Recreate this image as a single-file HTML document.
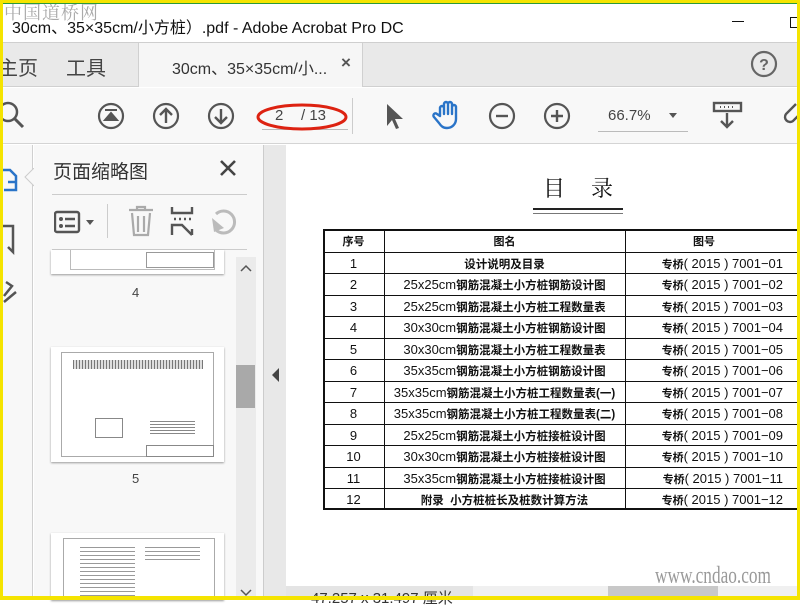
<!DOCTYPE html>
<html><head><meta charset="utf-8"><style>
*{margin:0;padding:0;box-sizing:border-box}
body{width:800px;height:600px;overflow:hidden;position:relative;background:#fff;font-family:"Liberation Sans","Noto Sans CJK SC",sans-serif;color:#333}
.a{position:absolute}
.row{position:absolute;left:323px;width:480px;height:22px;border-top:1px solid #111;font-size:13px;color:#111}
.row span{position:absolute;top:3px;white-space:nowrap}
.c1{left:0;width:61px;text-align:center}
.c2{left:61px;width:241px;text-align:center}
.c3{left:302px;width:158px;text-align:right}
.b{font-weight:bold;font-size:11.5px}
</style></head><body>
<div class="a" style="left:0;top:0;width:800px;height:43px;background:#fff;border-bottom:1px solid #cfcfcf"></div>
<div class="a" style="left:4px;top:-1px;font-family:'Liberation Serif','Noto Serif CJK SC',serif;font-size:18px;color:#aaa;letter-spacing:1px">中国道桥网</div>
<div class="a" style="left:12px;top:14px;font-size:16px;color:#111;white-space:nowrap">30cm、35×35cm/小方桩）.pdf - Adobe Acrobat Pro DC</div>
<div class="a" style="left:732px;top:21px;width:12px;height:1px;background:#111"></div>
<div class="a" style="left:790px;top:17px;width:8px;height:11px;border:1px solid #111"></div>
<div class="a" style="left:0;top:43px;width:800px;height:44px;background:#e9e9e9;border-bottom:1px solid #d0d0d0"></div>
<div class="a" style="left:-2px;top:52px;font-size:20px;color:#444">主页</div>
<div class="a" style="left:66px;top:52px;font-size:20px;color:#444">工具</div>
<div class="a" style="left:138px;top:43px;width:225px;height:44px;background:#f6f6f6;border-left:1px solid #d0d0d0;border-right:1px solid #d0d0d0"></div>
<div class="a" style="left:172px;top:55px;font-size:16px;color:#333;white-space:nowrap">30cm、35×35cm/小...</div>
<div class="a" style="left:341px;top:53px;font-size:17px;color:#555;font-weight:bold">×</div>
<svg class="a" style="left:750px;top:50px" width="28" height="28"><circle cx="14" cy="14" r="12" fill="none" stroke="#666" stroke-width="2.2"/><text x="14" y="20" text-anchor="middle" font-family="Liberation Sans" font-weight="bold" font-size="16" fill="#666">?</text></svg>
<div class="a" style="left:0;top:88px;width:800px;height:56px;background:#f8f8f8;border-bottom:1px solid #d4d4d4"></div>
<svg class="a" style="left:0;top:100px" width="30" height="30"><circle cx="8" cy="12" r="9" fill="none" stroke="#555" stroke-width="2.5"/><line x1="14" y1="18" x2="23" y2="27" stroke="#555" stroke-width="3"/></svg>
<svg class="a" style="left:97px;top:102px" width="28" height="28"><circle cx="14" cy="14" r="12" fill="none" stroke="#555" stroke-width="2.2"/><path d="M8 8h12M8 18l6-7 6 7z" stroke="#555" stroke-width="2" fill="#555"/></svg>
<svg class="a" style="left:152px;top:102px" width="28" height="28"><circle cx="14" cy="14" r="12" fill="none" stroke="#555" stroke-width="2.2"/><path d="M14 21V7M8 13l6-6 6 6" stroke="#555" stroke-width="2.4" fill="none"/></svg>
<svg class="a" style="left:207px;top:102px" width="28" height="28"><circle cx="14" cy="14" r="12" fill="none" stroke="#555" stroke-width="2.2"/><path d="M14 7v14M8 15l6 6 6-6" stroke="#555" stroke-width="2.4" fill="none"/></svg>
<div class="a" style="left:262px;top:129px;width:86px;height:1px;background:#bbb"></div>
<svg class="a" style="left:255px;top:100px" width="100" height="34"><ellipse cx="47" cy="17" rx="44" ry="12" fill="none" stroke="#d21" stroke-width="3"/></svg>
<div class="a" style="left:275px;top:107px;font-size:15px;color:#444">2</div>
<div class="a" style="left:301px;top:107px;font-size:15px;color:#444">/ 13</div>
<div class="a" style="left:352px;top:98px;width:1px;height:36px;background:#ccc"></div>
<svg class="a" style="left:383px;top:102px" width="22" height="28"><path d="M4 2v22l5-6 4 9 3-1-4-9h8z" fill="#555"/></svg>
<svg class="a" style="left:432px;top:99px" width="32" height="32"><path d="M8 17V9a2 2 0 0 1 4 0v6V5a2 2 0 0 1 4 0v10V5a2 2 0 0 1 4 0v10V8a2 2 0 0 1 4 0v12c0 5-4 9-9 9-4 0-6-2-8-5l-5-6a2 2 0 0 1 3-3z" fill="none" stroke="#2a74c8" stroke-width="2.4" stroke-linejoin="round"/></svg>
<svg class="a" style="left:488px;top:102px" width="28" height="28"><circle cx="14" cy="14" r="12" fill="none" stroke="#555" stroke-width="2.2"/><path d="M8 14h12" stroke="#555" stroke-width="2.4"/></svg>
<svg class="a" style="left:543px;top:102px" width="28" height="28"><circle cx="14" cy="14" r="12" fill="none" stroke="#555" stroke-width="2.2"/><path d="M8 14h12M14 8v12" stroke="#555" stroke-width="2.4"/></svg>
<div class="a" style="left:608px;top:107px;font-size:15px;color:#444">66.7%</div>
<div class="a" style="left:669px;top:113px;width:0;height:0;border-left:4px solid transparent;border-right:4px solid transparent;border-top:5px solid #555"></div>
<div class="a" style="left:598px;top:131px;width:90px;height:1px;background:#bbb"></div>
<svg class="a" style="left:712px;top:100px" width="32" height="30"><rect x="2" y="3" width="27" height="8" fill="none" stroke="#555" stroke-width="2.4"/><path d="M8 7h1M12 7h1M16 7h1M20 7h1" stroke="#555" stroke-width="2"/><path d="M15 13v14M9 21l6 6 6-6" stroke="#555" stroke-width="2.4" fill="none"/></svg>
<svg class="a" style="left:780px;top:100px" width="20" height="30"><path d="M16 4l-10 10a5 5 0 0 0 7 7l5-5" fill="none" stroke="#555" stroke-width="2.4"/></svg>
<div class="a" style="left:0;top:145px;width:33px;height:455px;background:#f8f8f8;border-right:1px solid #d0d0d0"></div>
<svg class="a" style="left:0;top:165px" width="20" height="30"><path d="M2 5h8l6 6v6h-8M16 17v8H4" fill="none" stroke="#2a74c8" stroke-width="2.5"/></svg>
<svg class="a" style="left:0;top:222px" width="20" height="34"><path d="M3 4h10v26l-5-5" fill="none" stroke="#555" stroke-width="2.5"/></svg>
<svg class="a" style="left:0;top:280px" width="20" height="30"><path d="M6 2l6 4-8 10M4 22l12-10" fill="none" stroke="#555" stroke-width="2.5"/></svg>
<svg class="a" style="left:24px;top:168px" width="11" height="26"><path d="M10 0L1 9l9 9" fill="#f8f8f8" stroke="#ccc"/></svg>
<div class="a" style="left:34px;top:145px;width:229px;height:455px;background:#f8f8f8"></div>
<div class="a" style="left:53px;top:157px;font-size:19px;color:#333">页面缩略图</div>
<svg class="a" style="left:219px;top:159px" width="18" height="18"><path d="M2 2l14 14M16 2L2 16" stroke="#444" stroke-width="2.6"/></svg>
<div class="a" style="left:52px;top:194px;width:195px;height:1px;background:#ccc"></div>
<svg class="a" style="left:54px;top:210px" width="45" height="24"><rect x="1" y="2" width="24" height="20" rx="2" fill="none" stroke="#555" stroke-width="2.4"/><circle cx="7" cy="9" r="2" fill="#555"/><circle cx="7" cy="16" r="2" fill="#555"/><path d="M11 9h10M11 16h10" stroke="#555" stroke-width="2.4"/><path d="M32 10h8l-4 5z" fill="#555"/></svg>
<div class="a" style="left:107px;top:204px;width:1px;height:34px;background:#ccc"></div>
<svg class="a" style="left:127px;top:205px" width="28" height="32"><path d="M2 5h24M10 5V2h8v3M5 8l2 22h14l2-22M11 11v16M17 11v16" fill="none" stroke="#aaa" stroke-width="2.2"/></svg>
<svg class="a" style="left:170px;top:207px" width="24" height="30"><path d="M2 0v6h20V0M4 12h2M9 12h2M14 12h2M19 12h2M2 28v-10h10l10 10M22 22v6" fill="none" stroke="#555" stroke-width="2.4"/></svg>
<svg class="a" style="left:208px;top:206px" width="32" height="30"><path d="M8 24A11 11 0 1 0 8 8" fill="none" stroke="#bbb" stroke-width="3"/><path d="M4 12l2 14 10-4z" fill="#bbb"/></svg>
<div class="a" style="left:52px;top:249px;width:195px;height:1px;background:#ccc"></div>
<div class="a" style="left:51px;top:250px;width:173px;height:24px;background:#fff;box-shadow:0 1px 2px #999"></div>
<div class="a" style="left:70px;top:250px;width:145px;height:20px;border:1px solid #bbb;border-top:none"></div>
<div class="a" style="left:146px;top:252px;width:68px;height:16px;border:1px solid #999"></div>
<div class="a" style="left:132px;top:285px;font-size:13px;color:#444">4</div>
<div class="a" style="left:51px;top:347px;width:173px;height:115px;background:#fff;box-shadow:0 1px 2px #999"></div>
<div class="a" style="left:61px;top:352px;width:153px;height:105px;border:1px solid #aaa"></div>
<div class="a" style="left:73px;top:360px;width:130px;height:9px;background:repeating-linear-gradient(90deg,#777 0 1px,#ddd 1px 3px)"></div>
<div class="a" style="left:95px;top:418px;width:28px;height:20px;border:1px solid #888"></div>
<div class="a" style="left:150px;top:420px;width:45px;height:14px;background:repeating-linear-gradient(0deg,#888 0 1px,#fff 1px 3px)"></div>
<div class="a" style="left:146px;top:445px;width:68px;height:12px;border:1px solid #888"></div>
<div class="a" style="left:132px;top:471px;font-size:13px;color:#444">5</div>
<div class="a" style="left:51px;top:533px;width:173px;height:67px;background:#fff;box-shadow:0 1px 2px #999"></div>
<div class="a" style="left:63px;top:538px;width:152px;height:62px;border:1px solid #aaa"></div>
<div class="a" style="left:80px;top:544px;width:55px;height:56px;background:repeating-linear-gradient(0deg,#999 0 1px,#fff 1px 4px)"></div>
<div class="a" style="left:145px;top:544px;width:55px;height:16px;background:repeating-linear-gradient(0deg,#999 0 1px,#fff 1px 4px)"></div>
<div class="a" style="left:236px;top:257px;width:20px;height:343px;background:#ebebeb"></div>
<svg class="a" style="left:239px;top:263px" width="14" height="10"><path d="M2 8l5-5 5 5" fill="none" stroke="#555" stroke-width="1.5"/></svg>
<div class="a" style="left:236px;top:365px;width:19px;height:43px;background:#a9a9a9"></div>
<svg class="a" style="left:239px;top:588px" width="14" height="10"><path d="M2 2l5 5 5-5" fill="none" stroke="#555" stroke-width="1.5"/></svg>
<div class="a" style="left:263px;top:145px;width:1px;height:455px;background:#ccc"></div>
<div class="a" style="left:264px;top:145px;width:22px;height:455px;background:#e8e8e8"></div>
<div class="a" style="left:272px;top:368px;width:0;height:0;border-top:7px solid transparent;border-bottom:7px solid transparent;border-right:7px solid #444"></div>
<div class="a" style="left:286px;top:145px;width:514px;height:455px;background:#fff"></div>
<div class="a" style="left:543px;top:172px;font-family:'Liberation Serif','Noto Serif CJK SC',serif;font-size:22px;color:#111;letter-spacing:26px">目录</div>
<div class="a" style="left:533px;top:208px;width:90px;height:2px;background:#222"></div>
<div class="a" style="left:533px;top:213px;width:90px;height:1px;background:#777"></div>
<div class="a" style="left:323px;top:229px;width:480px;height:281px;border:2px solid #111;border-right:none"></div>
<div class="a" style="left:384px;top:230px;width:1px;height:279px;background:#111"></div>
<div class="a" style="left:625px;top:230px;width:1px;height:279px;background:#111"></div>
<div class="row" style="top:230px;border-top:none"><span class="c1 b" style="font-size:11px">序号</span><span class="c2 b" style="font-size:11px">图名</span><span class="c3 b" style="font-size:11px;text-align:center;left:302px">图号</span></div>
<div class="row" style="top:251.5px"><span class="c1">1</span><span class="c2 b">设计说明及目录</span><span class="c3"><b style="font-size:11px">专桥</b>( 2015 ) 7001−01</span></div>
<div class="row" style="top:273px"><span class="c1">2</span><span class="c2">25x25cm<b class="b">钢筋混凝土小方桩钢筋设计图</b></span><span class="c3"><b style="font-size:11px">专桥</b>( 2015 ) 7001−02</span></div>
<div class="row" style="top:294.5px"><span class="c1">3</span><span class="c2">25x25cm<b class="b">钢筋混凝土小方桩工程数量表</b></span><span class="c3"><b style="font-size:11px">专桥</b>( 2015 ) 7001−03</span></div>
<div class="row" style="top:316px"><span class="c1">4</span><span class="c2">30x30cm<b class="b">钢筋混凝土小方桩钢筋设计图</b></span><span class="c3"><b style="font-size:11px">专桥</b>( 2015 ) 7001−04</span></div>
<div class="row" style="top:337.5px"><span class="c1">5</span><span class="c2">30x30cm<b class="b">钢筋混凝土小方桩工程数量表</b></span><span class="c3"><b style="font-size:11px">专桥</b>( 2015 ) 7001−05</span></div>
<div class="row" style="top:359px"><span class="c1">6</span><span class="c2">35x35cm<b class="b">钢筋混凝土小方桩钢筋设计图</b></span><span class="c3"><b style="font-size:11px">专桥</b>( 2015 ) 7001−06</span></div>
<div class="row" style="top:380.5px"><span class="c1">7</span><span class="c2">35x35cm<b class="b">钢筋混凝土小方桩工程数量表(一)</b></span><span class="c3"><b style="font-size:11px">专桥</b>( 2015 ) 7001−07</span></div>
<div class="row" style="top:402px"><span class="c1">8</span><span class="c2">35x35cm<b class="b">钢筋混凝土小方桩工程数量表(二)</b></span><span class="c3"><b style="font-size:11px">专桥</b>( 2015 ) 7001−08</span></div>
<div class="row" style="top:423.5px"><span class="c1">9</span><span class="c2">25x25cm<b class="b">钢筋混凝土小方桩接桩设计图</b></span><span class="c3"><b style="font-size:11px">专桥</b>( 2015 ) 7001−09</span></div>
<div class="row" style="top:445px"><span class="c1">10</span><span class="c2">30x30cm<b class="b">钢筋混凝土小方桩接桩设计图</b></span><span class="c3"><b style="font-size:11px">专桥</b>( 2015 ) 7001−10</span></div>
<div class="row" style="top:466.5px"><span class="c1">11</span><span class="c2">35x35cm<b class="b">钢筋混凝土小方桩接桩设计图</b></span><span class="c3"><b style="font-size:11px">专桥</b>( 2015 ) 7001−11</span></div>
<div class="row" style="top:488px"><span class="c1">12</span><span class="c2 b">附录&nbsp;&nbsp;小方桩桩长及桩数计算方法</span><span class="c3"><b style="font-size:11px">专桥</b>( 2015 ) 7001−12</span></div>
<div class="a" style="left:286px;top:586px;width:514px;height:14px;background:#f0f0f0"></div>
<div class="a" style="left:286px;top:586px;width:187px;height:14px;background:#e4e4e4"></div>
<div class="a" style="left:311px;top:587px;font-size:15px;color:#333;white-space:nowrap">47.257 x 31.497 厘米</div>
<div class="a" style="left:608px;top:586px;width:110px;height:14px;background:#c8c8c8"></div>
<div class="a" style="left:655px;top:563px;font-family:'Liberation Serif',serif;font-size:24px;color:#999;transform:scaleX(0.72);transform-origin:0 0;white-space:nowrap">www.cndao.com</div>
<div class="a" style="left:0;top:0;width:800px;height:3px;background:#f5e400"></div>
<div class="a" style="left:0;top:3px;width:800px;height:1px;background:#2a9a3a"></div>
<div class="a" style="left:0;top:0;width:3px;height:600px;background:#f5e400"></div>
<div class="a" style="left:797px;top:0;width:3px;height:600px;background:#f5e400"></div>
<div class="a" style="left:0;top:596px;width:800px;height:4px;background:#f5e400"></div>
</body></html>
